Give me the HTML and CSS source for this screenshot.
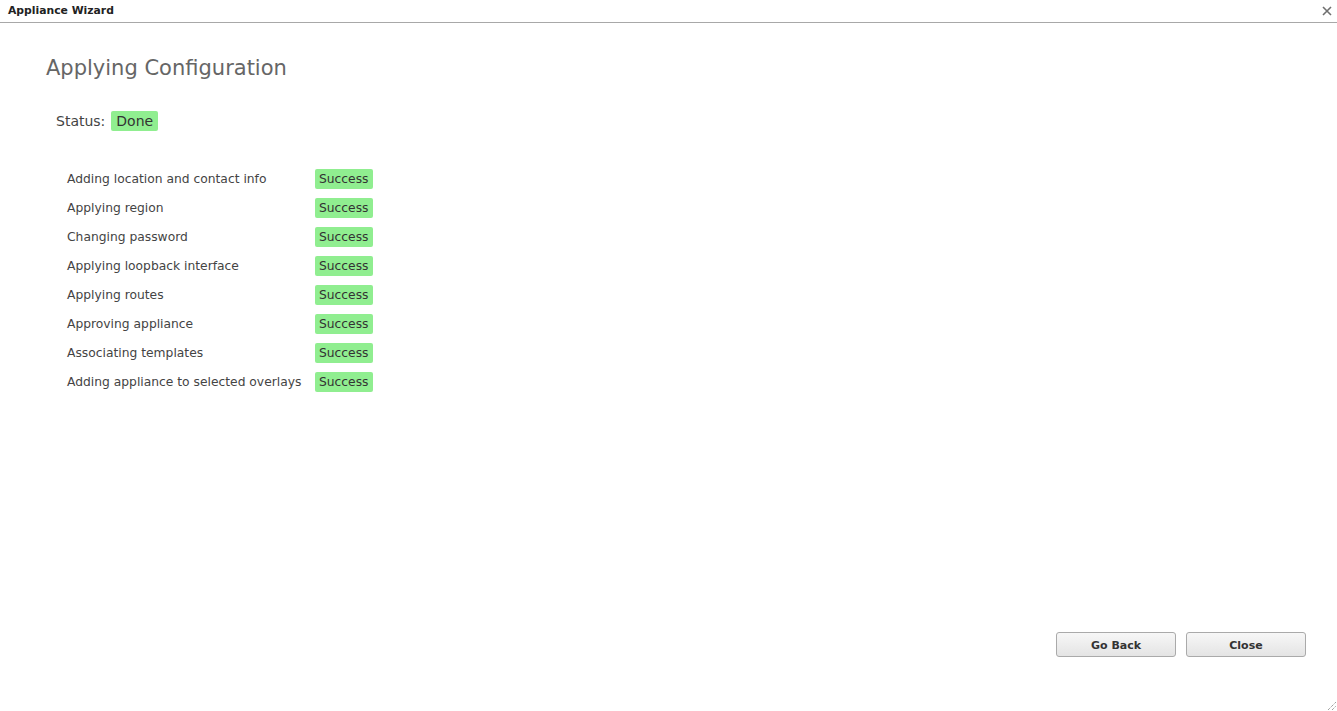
FILE: index.html
```html
<!DOCTYPE html>
<html>
<head>
<meta charset="utf-8">
<link rel="stylesheet" href="styles.css">
</head>
<body>
<div class="dialog">
  <div class="titlebar">
    <span class="title">Appliance Wizard</span>
    <span class="close-x">
      <svg width="10" height="10" viewBox="0 0 10 10"><path d="M1 1 L9 9 M9 1 L1 9" stroke="#6f6f6f" stroke-width="1.6" fill="none"/></svg>
    </span>
  </div>
  <div class="content">
    <h1 class="heading">Applying Configuration</h1>
    <div class="status">Status: <span class="badge badge-lg">Done</span></div>
    <table class="steps">
      <tr><td class="label">Adding location and contact info</td><td><span class="badge">Success</span></td></tr>
      <tr><td class="label">Applying region</td><td><span class="badge">Success</span></td></tr>
      <tr><td class="label">Changing password</td><td><span class="badge">Success</span></td></tr>
      <tr><td class="label">Applying loopback interface</td><td><span class="badge">Success</span></td></tr>
      <tr><td class="label">Applying routes</td><td><span class="badge">Success</span></td></tr>
      <tr><td class="label">Approving appliance</td><td><span class="badge">Success</span></td></tr>
      <tr><td class="label">Associating templates</td><td><span class="badge">Success</span></td></tr>
      <tr><td class="label">Adding appliance to selected overlays</td><td><span class="badge">Success</span></td></tr>
    </table>
  </div>
  <div class="footer">
    <button class="btn">Go Back</button>
    <button class="btn">Close</button>
  </div>
  <div class="grip">
    <svg width="10" height="10" viewBox="0 0 10 10"><path d="M1 9 L9 1 M5 9 L9 5" stroke="#777" stroke-width="1" stroke-dasharray="1 1" fill="none"/></svg>
  </div>
</div>
</body>
</html>
```
FILE: styles.css
```css
html, body {
  margin: 0;
  padding: 0;
  background: #fff;
}
body {
  font-family: "DejaVu Sans", Verdana, sans-serif;
  color: #333;
}
.dialog {
  position: relative;
  height: 711px;
  display: flex;
  flex-direction: column;
  overflow: hidden;
}
.titlebar {
  height: 22px;
  border-bottom: 1px solid #a8a8a8;
  display: flex;
  align-items: center;
  justify-content: space-between;
  padding: 0 5px 0 8px;
  box-sizing: content-box;
}
.title {
  font-size: 10.8px;
  font-weight: bold;
  color: #222;
  margin-top: -2px;
}
.close-x {
  display: flex;
  align-items: center;
  margin-top: 0;
}
.content {
  flex: 1;
  padding: 0 0 0 46px;
}
.heading {
  font-weight: normal;
  font-size: 21px;
  color: #666;
  margin: 30px 0 0 0;
  line-height: 30px;
}
.status {
  margin: 28px 0 0 10px;
  font-size: 14px;
  color: #444;
  display: flex;
  align-items: center;
  gap: 6px;
  height: 20px;
}
.badge {
  display: inline-block;
  background: #90ee90;
  color: #333;
  border-radius: 2px;
  padding: 0 4px;
  line-height: 20px;
  font-size: 12.3px;
}
.badge-lg {
  font-size: 14px;
  padding: 0 5px;
}
.steps {
  margin: 33px 0 0 21px;
  border-collapse: collapse;
}
.steps td {
  padding: 0;
  height: 29px;
  font-size: 12.3px;
  color: #444;
}
.steps .label {
  width: 248px;
}
.footer {
  display: flex;
  justify-content: flex-end;
  gap: 10px;
  padding: 0 31px 54px 0;
}
.btn {
  width: 120px;
  height: 25px;
  border: 1px solid #aaa;
  border-radius: 3px;
  background: linear-gradient(#f7f7f7, #e4e4e4);
  font-family: "DejaVu Sans", Verdana, sans-serif;
  font-size: 11px;
  font-weight: bold;
  color: #333;
  padding: 1px 0 0 0;
}
.grip {
  position: absolute;
  right: 0;
  bottom: 0;
  line-height: 0;
}
```
